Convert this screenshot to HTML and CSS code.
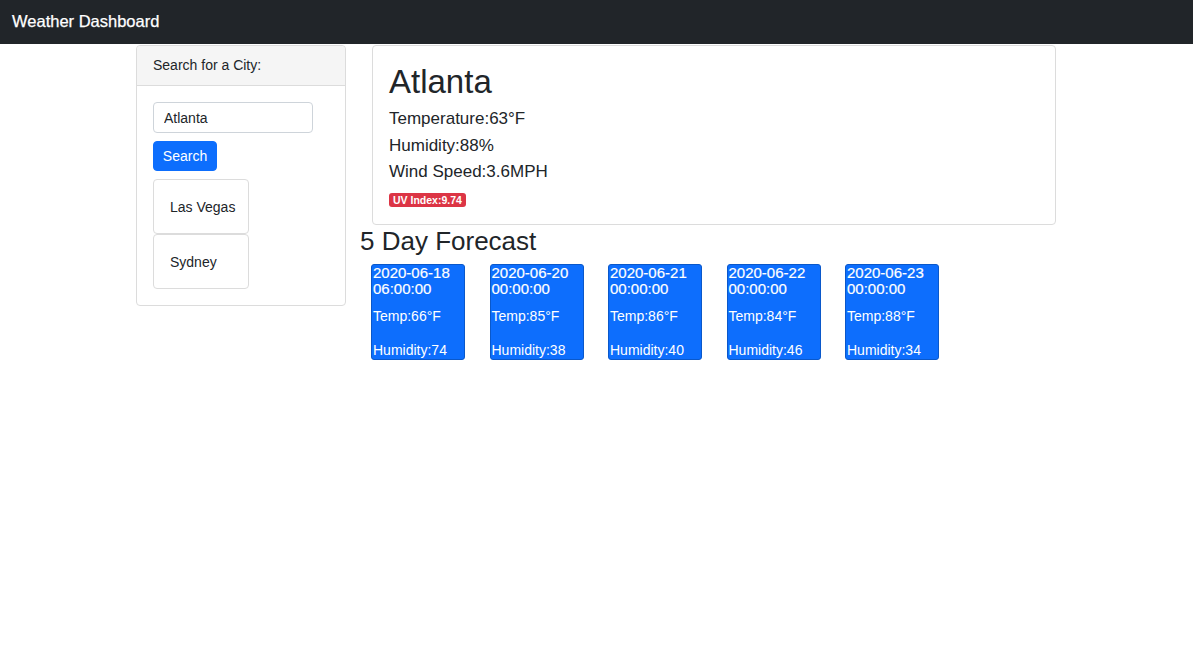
FILE: index.html
```html
<!DOCTYPE html>
<html lang="en">
<head>
<meta charset="utf-8">
<title>Weather Dashboard</title>
<link rel="stylesheet" href="styles.css">
</head>
<body>
<nav class="navbar"><span class="brand">Weather Dashboard</span></nav>
<div class="page">
  <aside class="side-card">
    <div class="side-header">Search for a City:</div>
    <div class="side-body">
      <input class="city-input" type="text" value="Atlanta">
      <button class="search-btn">Search</button>
      <ul class="history">
        <li class="history-item">Las Vegas</li>
        <li class="history-item">Sydney</li>
      </ul>
    </div>
  </aside>
  <main class="main">
    <section class="current-card">
      <h1 class="city-name">Atlanta</h1>
      <p class="stat">Temperature:63°F</p>
      <p class="stat">Humidity:88%</p>
      <p class="stat">Wind Speed:3.6MPH</p>
      <span class="uv-badge">UV Index:9.74</span>
    </section>
    <h2 class="forecast-title">5 Day Forecast</h2>
    <div class="forecast-row">
      <div class="fc-card"><div class="fc-date">2020-06-18 06:00:00</div><p class="fc-temp">Temp:66°F</p><p class="fc-hum">Humidity:74</p></div>
      <div class="fc-card"><div class="fc-date">2020-06-20 00:00:00</div><p class="fc-temp">Temp:85°F</p><p class="fc-hum">Humidity:38</p></div>
      <div class="fc-card"><div class="fc-date">2020-06-21 00:00:00</div><p class="fc-temp">Temp:86°F</p><p class="fc-hum">Humidity:40</p></div>
      <div class="fc-card"><div class="fc-date">2020-06-22 00:00:00</div><p class="fc-temp">Temp:84°F</p><p class="fc-hum">Humidity:46</p></div>
      <div class="fc-card"><div class="fc-date">2020-06-23 00:00:00</div><p class="fc-temp">Temp:88°F</p><p class="fc-hum">Humidity:34</p></div>
    </div>
  </main>
</div>
</body>
</html>
```
FILE: styles.css
```css
* { box-sizing: border-box; }
body {
  margin: 0;
  font-family: "Liberation Sans", Arial, sans-serif;
  color: #212529;
  background: #fff;
}
.navbar {
  height: 44px;
  background: #212529;
  display: flex;
  align-items: center;
  padding: 0 12px;
}
.brand {
  color: #fff;
  font-size: 16.5px;
  line-height: 20px;
  margin-top: -2px;
  -webkit-text-stroke: 0.25px #fff;
}
.page {
  display: flex;
  align-items: flex-start;
  padding-left: 136px;
  padding-top: 1px;
}
.side-card {
  width: 210px;
  border: 1px solid #dcdcdc;
  border-radius: 4px;
  font-size: 14px;
}
.side-header {
  background: #f5f5f5;
  border-bottom: 1px solid #dcdcdc;
  padding: 9px 16px 9px;
  line-height: 21px;
  border-radius: 4px 4px 0 0;
}
.side-body {
  padding: 16px 16px 16px;
  display: flex;
  flex-direction: column;
  align-items: flex-start;
}
.city-input {
  width: 160px;
  height: 31px;
  border: 1px solid #ced4da;
  border-radius: 4px;
  padding: 0 10px;
  font: inherit;
  font-size: 14px;
  color: #212529;
}
.search-btn {
  margin-top: 8px;
  height: 30px;
  width: 64px;
  background: #0d6efd;
  border: 1px solid #0d6efd;
  border-radius: 4px;
  color: #fff;
  font: inherit;
  font-size: 14px;
  padding: 0;
}
.history {
  list-style: none;
  margin: 8px 0 0;
  padding: 0;
}
.history-item {
  width: 96px;
  height: 55px;
  border: 1px solid #dcdcdc;
  border-radius: 4px;
  padding: 0 16px;
  display: flex;
  align-items: center;
  line-height: 20px;
  white-space: nowrap;
}
.main {
  margin-left: 14px;
}
.current-card {
  margin-left: 12px;
  width: 684px;
  height: 180px;
  border: 1px solid #dcdcdc;
  border-radius: 4px;
  padding: 16px 16px;
}
.city-name {
  margin: 0 0 5px;
  font-size: 33px;
  font-weight: normal;
  line-height: 39px;
}
.stat {
  margin: 0;
  font-size: 17px;
  line-height: 26.5px;
}
.uv-badge {
  display: inline-block;
  margin-top: 7px;
  background: #dc3545;
  color: #fff;
  font-size: 10.5px;
  font-weight: bold;
  line-height: 14px;
  padding: 0 4px;
  border-radius: 3px;
}
.forecast-title {
  margin: 1px 0 0;
  font-size: 26px;
  font-weight: normal;
  line-height: 31px;
}
.forecast-row {
  display: flex;
  gap: 24.5px;
  margin-top: 7px;
  margin-left: 11px;
}
.fc-card {
  width: 94px;
  height: 96px;
  background: #0d6efd;
  border: 1px solid #0a58ca;
  border-radius: 3px;
  color: #fff;
  padding: 0 1px;
}
.fc-date {
  font-size: 15px;
  line-height: 16px;
  -webkit-text-stroke: 0.2px #fff;
}
.fc-temp {
  margin: 11px 0 0;
  font-size: 14px;
  line-height: 16px;
}
.fc-hum {
  margin: 18px 0 0;
  font-size: 14px;
  line-height: 16px;
}
```
